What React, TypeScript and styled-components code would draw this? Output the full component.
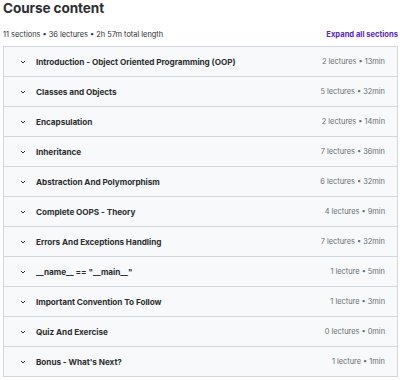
import styled, { createGlobalStyle } from 'styled-components';

const GlobalStyle = createGlobalStyle`
  html, body {
    margin: 0;
    padding: 0;
    background: #ffffff;
  }
  body {
    font-family: Inter, "Liberation Sans", sans-serif;
    color: #2d2f31;
  }
`;

const sections = [
  { title: 'Introduction - Object Oriented Programming (OOP)', meta: '2 lectures • 13min' },
  { title: 'Classes and Objects', meta: '5 lectures • 32min' },
  { title: 'Encapsulation', meta: '2 lectures • 14min' },
  { title: 'Inheritance', meta: '7 lectures • 36min' },
  { title: 'Abstraction And Polymorphism', meta: '6 lectures • 32min' },
  { title: 'Complete OOPS - Theory', meta: '4 lectures • 9min' },
  { title: 'Errors And Exceptions Handling', meta: '7 lectures • 32min' },
  { title: '__name__ == "__main__"', meta: '1 lecture • 5min' },
  { title: 'Important Convention To Follow', meta: '1 lecture • 3min' },
  { title: 'Quiz And Exercise', meta: '0 lectures • 0min' },
  { title: "Bonus - What's Next?", meta: '1 lecture • 1min' },
];

const Page = styled.div`
  width: 400px;
  padding: 0 2px 0 3px;
  box-sizing: border-box;
`;

const Title = styled.h2`
  margin: 0;
  font-size: 13.6px;
  font-weight: 700;
  line-height: 16px;
  letter-spacing: -0.1px;
  color: #2d2f31;
`;

const SummaryBar = styled.div`
  display: flex;
  justify-content: space-between;
  align-items: center;
  margin-top: 11px;
  height: 15px;
`;

const SummaryText = styled.span`
  font-size: 7.4px;
  color: #2d2f31;
`;

const ExpandLink = styled.button`
  border: none;
  background: none;
  padding: 0;
  font-family: inherit;
  font-size: 7.6px;
  font-weight: 700;
  color: #5624d0;
  cursor: pointer;
`;

const Accordion = styled.div`
  margin-top: 4px;
  border: 1px solid #d1d7dc;
  border-bottom: none;
`;

const SectionRow = styled.div`
  display: flex;
  align-items: center;
  height: 29px;
  padding: 0 12px 0 16px;
  background: #f7f9fa;
  border-bottom: 1px solid #d1d7dc;
`;

const Chevron = styled.svg`
  width: 6px;
  height: 6px;
  flex: none;
  margin-right: 10px;
`;

const SectionTitle = styled.span`
  flex: 1;
  font-size: 8.2px;
  font-weight: 700;
  letter-spacing: -0.05px;
  color: #2d2f31;
  white-space: nowrap;
`;

const SectionMeta = styled.span`
  font-size: 7.4px;
  color: #6a6f73;
  white-space: nowrap;
`;

export default function App() {
  return (
    <Page>
      <GlobalStyle />
      <Title>Course content</Title>
      <SummaryBar>
        <SummaryText>11 sections • 36 lectures • 2h 57m total length</SummaryText>
        <ExpandLink>Expand all sections</ExpandLink>
      </SummaryBar>
      <Accordion>
        {sections.map((s) => (
          <SectionRow key={s.title}>
            <Chevron viewBox="0 0 6 6">
              <path d="M1 2 L3 4 L5 2" fill="none" stroke="#2d2f31" strokeWidth="1" />
            </Chevron>
            <SectionTitle>{s.title}</SectionTitle>
            <SectionMeta>{s.meta}</SectionMeta>
          </SectionRow>
        ))}
      </Accordion>
    </Page>
  );
}
